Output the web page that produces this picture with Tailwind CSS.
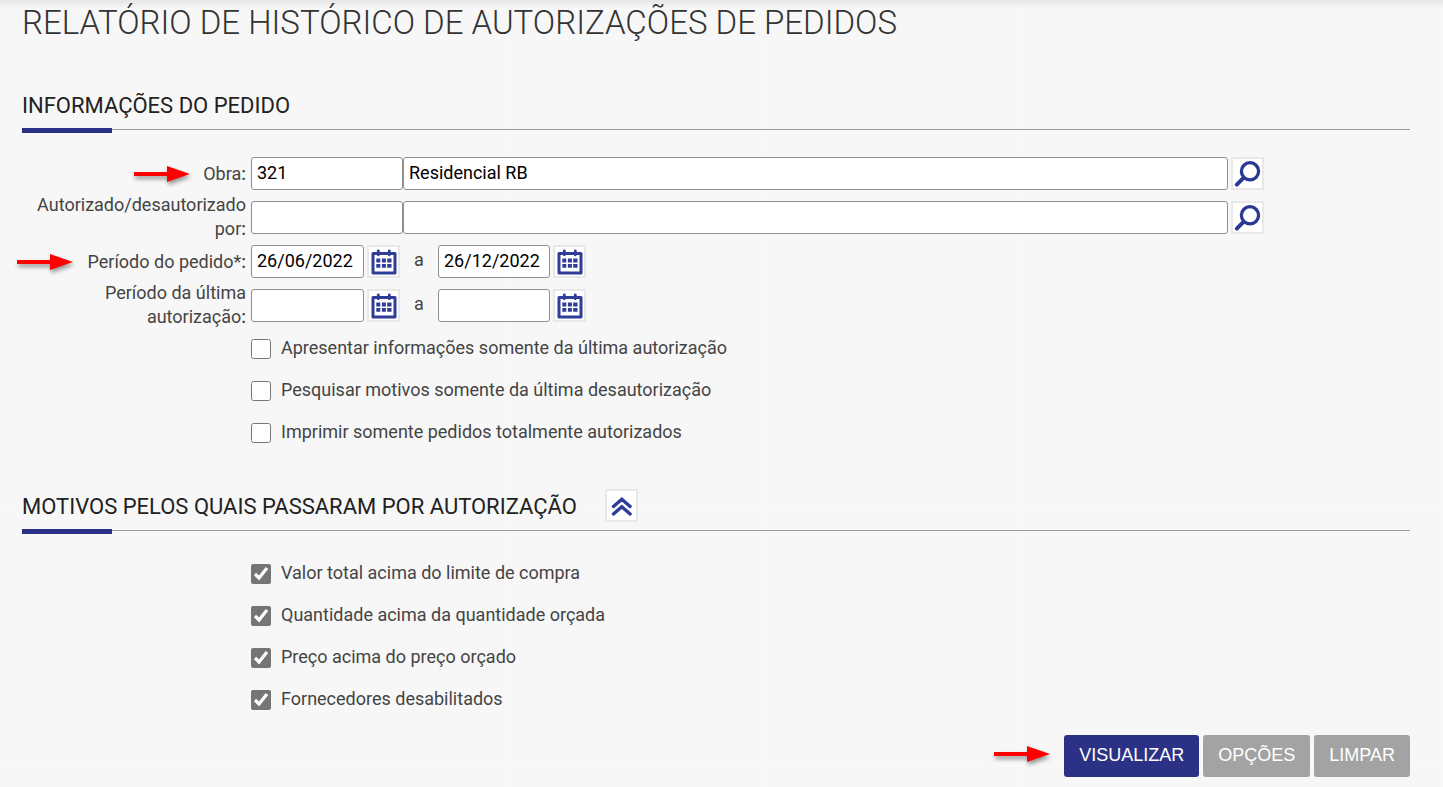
<!DOCTYPE html>
<html lang="pt-BR">
<head>
    <meta charset="UTF-8">
    <meta name="viewport" content="width=device-width, initial-scale=1.0">
    <title>Relatório de Histórico de Autorizações de Pedidos</title>
    <script src="https://cdn.jsdelivr.net/npm/@tailwindcss/browser@4"></script>
</head>
<body class="min-h-screen bg-[#f7f7f7] bg-linear-to-b from-[#e6e6e6] to-[#f7f7f7] to-[8px] font-[Roboto,sans-serif] text-lg leading-6 text-[#444]">

    <!-- Icons -->
    <svg class="hidden">
        <symbol id="icon-search" viewBox="0 0 33 33">
            <circle cx="19" cy="14.3" r="8.6" fill="none" stroke="#2a3894" stroke-width="3.3"/>
            <path d="M12.500 20.800 5.800 27.700" fill="none" stroke="#2a3894" stroke-width="3.900" stroke-linecap="round"/>
        </symbol>
        <symbol id="icon-calendar" viewBox="0 0 33 33">
            <path d="M6 8.500h22v19.500H6z" fill="none" stroke="#2f3c98" stroke-width="3" stroke-linejoin="round"/>
            <path d="M11.300 5.800v4M22.300 5.800v4" stroke="#2f3c98" stroke-width="2.800" stroke-linecap="round"/>
            <path d="M9.300 13.500h4v4h-4zM14.900 13.500h4v4h-4zM20.200 13.500h4.300v4h-4.300zM9.300 19h4v3.800h-4zM14.900 19h4v3.800h-4zM20.200 19h4.300v3.800h-4.300z" fill="#2f3c98"/>
        </symbol>
        <symbol id="icon-collapse" viewBox="0 0 33 33">
            <path d="m8.500 17.500 8.300-7.300 8.300 7.300M8.500 25l8.300-7.300 8.300 7.300" fill="none" stroke="#2f3c98" stroke-width="3.400" stroke-linecap="round"/>
        </symbol>
        <symbol id="icon-arrow" viewBox="0 0 56 16">
            <path d="M0 6h33V0l23 8-23 8v-6H0z" fill="#f00"/>
        </symbol>
    </svg>

    <main class="pr-[33px]">
        <h1 class="pt-px pl-[22px] text-[33px] leading-[44px] font-light text-[#333]">RELATÓRIO DE HISTÓRICO DE AUTORIZAÇÕES DE PEDIDOS</h1>

        <form id="relatorioForm">
            <section class="mt-[43px]">
                <div class="relative ml-[22px] flex h-[42px] items-start border-b border-[#999]">
                    <h2 class="text-[22px] leading-[35px] text-[#222]">INFORMAÇÕES DO PEDIDO</h2>
                    <span class="absolute -bottom-1 left-0 h-[5px] w-[90px] bg-[#2b3285]"></span>
                </div>

                <div class="mt-[22px]">
                    <div class="flex h-11 items-center pb-px">
                        <div class="mr-[5px] flex w-[246px] shrink-0 items-center justify-end gap-[13px] text-right">
                            <svg class="h-4 w-14 shrink-0 drop-shadow-[1px_3px_2px_rgba(0,0,0,0.4)]"><use href="#icon-arrow"/></svg>
                            <label for="obra">Obra<b class="font-medium">:</b></label>
                        </div>
                        <input type="text" id="obra" name="obra" value="321" class="h-[33px] w-[152px] rounded-[3px] border border-[#8f8f8f] bg-white px-[5px] pb-0.5 text-black">
                        <input type="text" name="obra_nome" aria-label="Nome da obra" value="Residencial RB" class="h-[33px] min-w-0 flex-1 rounded-[3px] border border-[#8f8f8f] bg-white px-[5px] pb-0.5 text-black">
                        <button type="button" aria-label="Pesquisar obra" class="mr-[146px] ml-[3px] grid size-[33px] shrink-0 place-items-center bg-white inset-ring-2 inset-ring-[#e8e8e8]"><svg class="size-[33px]"><use href="#icon-search"/></svg></button>
                    </div>

                    <div class="flex h-11 items-center pb-px">
                        <div class="mr-[5px] flex w-[246px] shrink-0 justify-end pb-0.5 pl-[22px] text-right">
                            <label for="autorizado">Autorizado/desautorizado por<b class="font-medium">:</b></label>
                        </div>
                        <input type="text" id="autorizado" name="autorizado" class="h-[33px] w-[152px] rounded-[3px] border border-[#8f8f8f] bg-white px-[5px] pb-0.5 text-black">
                        <input type="text" name="autorizado_nome" aria-label="Nome do usuário" class="h-[33px] min-w-0 flex-1 rounded-[3px] border border-[#8f8f8f] bg-white px-[5px] pb-0.5 text-black">
                        <button type="button" aria-label="Pesquisar usuário" class="mr-[146px] ml-[3px] grid size-[33px] shrink-0 place-items-center bg-white inset-ring-2 inset-ring-[#e8e8e8]"><svg class="size-[33px]"><use href="#icon-search"/></svg></button>
                    </div>

                    <div class="flex h-11 items-center pb-px">
                        <div class="mr-[5px] flex w-[246px] shrink-0 items-center justify-end gap-[15px] text-right">
                            <svg class="h-4 w-14 shrink-0 drop-shadow-[1px_3px_2px_rgba(0,0,0,0.4)]"><use href="#icon-arrow"/></svg>
                            <label for="pedido_de">Período do pedido*<b class="font-medium">:</b></label>
                        </div>
                        <input type="text" id="pedido_de" name="pedido_de" value="26/06/2022" class="h-[33px] w-[113px] rounded-[3px] border border-[#8f8f8f] bg-white px-[5px] pb-0.5 text-black">
                        <button type="button" aria-label="Calendário, data inicial do pedido" class="ml-[3px] grid size-[33px] shrink-0 place-items-center bg-white inset-ring-2 inset-ring-[#e8e8e8]"><svg class="size-[33px]"><use href="#icon-calendar"/></svg></button>
                        <span class="w-[38px] pb-1 text-center">a</span>
                        <input type="text" name="pedido_ate" aria-label="Data final do pedido" value="26/12/2022" class="h-[33px] w-28 rounded-[3px] border border-[#8f8f8f] bg-white px-[5px] pb-0.5 text-black">
                        <button type="button" aria-label="Calendário, data final do pedido" class="ml-[3px] grid size-[33px] shrink-0 place-items-center bg-white inset-ring-2 inset-ring-[#e8e8e8]"><svg class="size-[33px]"><use href="#icon-calendar"/></svg></button>
                    </div>

                    <div class="flex h-11 items-center pb-px">
                        <div class="mr-[5px] flex w-[246px] shrink-0 justify-end pb-0.5 pl-[90px] text-right">
                            <label for="autorizacao_de">Período da última autorização<b class="font-medium">:</b></label>
                        </div>
                        <input type="text" id="autorizacao_de" name="autorizacao_de" class="h-[33px] w-[113px] rounded-[3px] border border-[#8f8f8f] bg-white px-[5px] pb-0.5 text-black">
                        <button type="button" aria-label="Calendário, data inicial da autorização" class="ml-[3px] grid size-[33px] shrink-0 place-items-center bg-white inset-ring-2 inset-ring-[#e8e8e8]"><svg class="size-[33px]"><use href="#icon-calendar"/></svg></button>
                        <span class="w-[38px] pb-1 text-center">a</span>
                        <input type="text" name="autorizacao_ate" aria-label="Data final da autorização" class="h-[33px] w-28 rounded-[3px] border border-[#8f8f8f] bg-white px-[5px] pb-0.5 text-black">
                        <button type="button" aria-label="Calendário, data final da autorização" class="ml-[3px] grid size-[33px] shrink-0 place-items-center bg-white inset-ring-2 inset-ring-[#e8e8e8]"><svg class="size-[33px]"><use href="#icon-calendar"/></svg></button>
                    </div>
                </div>

                <div class="pl-[251px]">
                    <div class="flex h-[42px] items-center gap-2.5">
                        <input type="checkbox" id="somente_ultima" class="size-5 accent-[#757575]">
                        <label for="somente_ultima" class="pb-0.5">Apresentar informações somente da última autorização</label>
                    </div>
                    <div class="flex h-[42px] items-center gap-2.5">
                        <input type="checkbox" id="motivos_ultima" class="size-5 accent-[#757575]">
                        <label for="motivos_ultima" class="pb-0.5">Pesquisar motivos somente da última desautorização</label>
                    </div>
                    <div class="flex h-[42px] items-center gap-2.5">
                        <input type="checkbox" id="totalmente" class="size-5 accent-[#757575]">
                        <label for="totalmente" class="pb-0.5">Imprimir somente pedidos totalmente autorizados</label>
                    </div>
                </div>
            </section>

            <section class="mt-[35px]">
                <div class="relative ml-[22px] flex h-[42px] items-start gap-7 border-b border-[#999]">
                    <h2 class="text-[22px] leading-[35px] text-[#222]">MOTIVOS PELOS QUAIS PASSARAM POR AUTORIZAÇÃO</h2>
                    <button type="button" aria-label="Recolher motivos" class="grid size-[33px] shrink-0 place-items-center bg-white inset-ring-2 inset-ring-[#e8e8e8]"><svg class="size-[33px]"><use href="#icon-collapse"/></svg></button>
                    <span class="absolute -bottom-1 left-0 h-[5px] w-[90px] bg-[#2b3285]"></span>
                </div>

                <div class="mt-[22px] pl-[251px]">
                    <div class="flex h-[42px] items-center gap-2.5">
                        <input type="checkbox" id="valor_total" checked class="size-5 accent-[#757575]">
                        <label for="valor_total" class="pb-0.5">Valor total acima do limite de compra</label>
                    </div>
                    <div class="flex h-[42px] items-center gap-2.5">
                        <input type="checkbox" id="quantidade" checked class="size-5 accent-[#757575]">
                        <label for="quantidade" class="pb-0.5">Quantidade acima da quantidade orçada</label>
                    </div>
                    <div class="flex h-[42px] items-center gap-2.5">
                        <input type="checkbox" id="preco" checked class="size-5 accent-[#757575]">
                        <label for="preco" class="pb-0.5">Preço acima do preço orçado</label>
                    </div>
                    <div class="flex h-[42px] items-center gap-2.5">
                        <input type="checkbox" id="fornecedores" checked class="size-5 accent-[#757575]">
                        <label for="fornecedores" class="pb-0.5">Fornecedores desabilitados</label>
                    </div>
                </div>
            </section>

            <div class="mt-3.5 flex items-center justify-end gap-1 font-['Liberation_Sans',Arial,sans-serif] text-white">
                <svg class="mr-2.5 mb-1 h-4 w-14 shrink-0 drop-shadow-[1px_3px_2px_rgba(0,0,0,0.4)]"><use href="#icon-arrow"/></svg>
                <button type="submit" class="h-[42px] rounded-[3px] bg-[#2b3285] px-[15px] pb-0.5 hover:bg-[#1f2566]">VISUALIZAR</button>
                <button type="button" class="h-[42px] rounded-[3px] bg-[#a3a3a3] px-[15px] pb-0.5 hover:bg-[#8f8f8f]">OPÇÕES</button>
                <button type="reset" class="h-[42px] rounded-[3px] bg-[#a3a3a3] px-[15px] pb-0.5 hover:bg-[#8f8f8f]">LIMPAR</button>
            </div>
        </form>
    </main>
</body>
</html>
